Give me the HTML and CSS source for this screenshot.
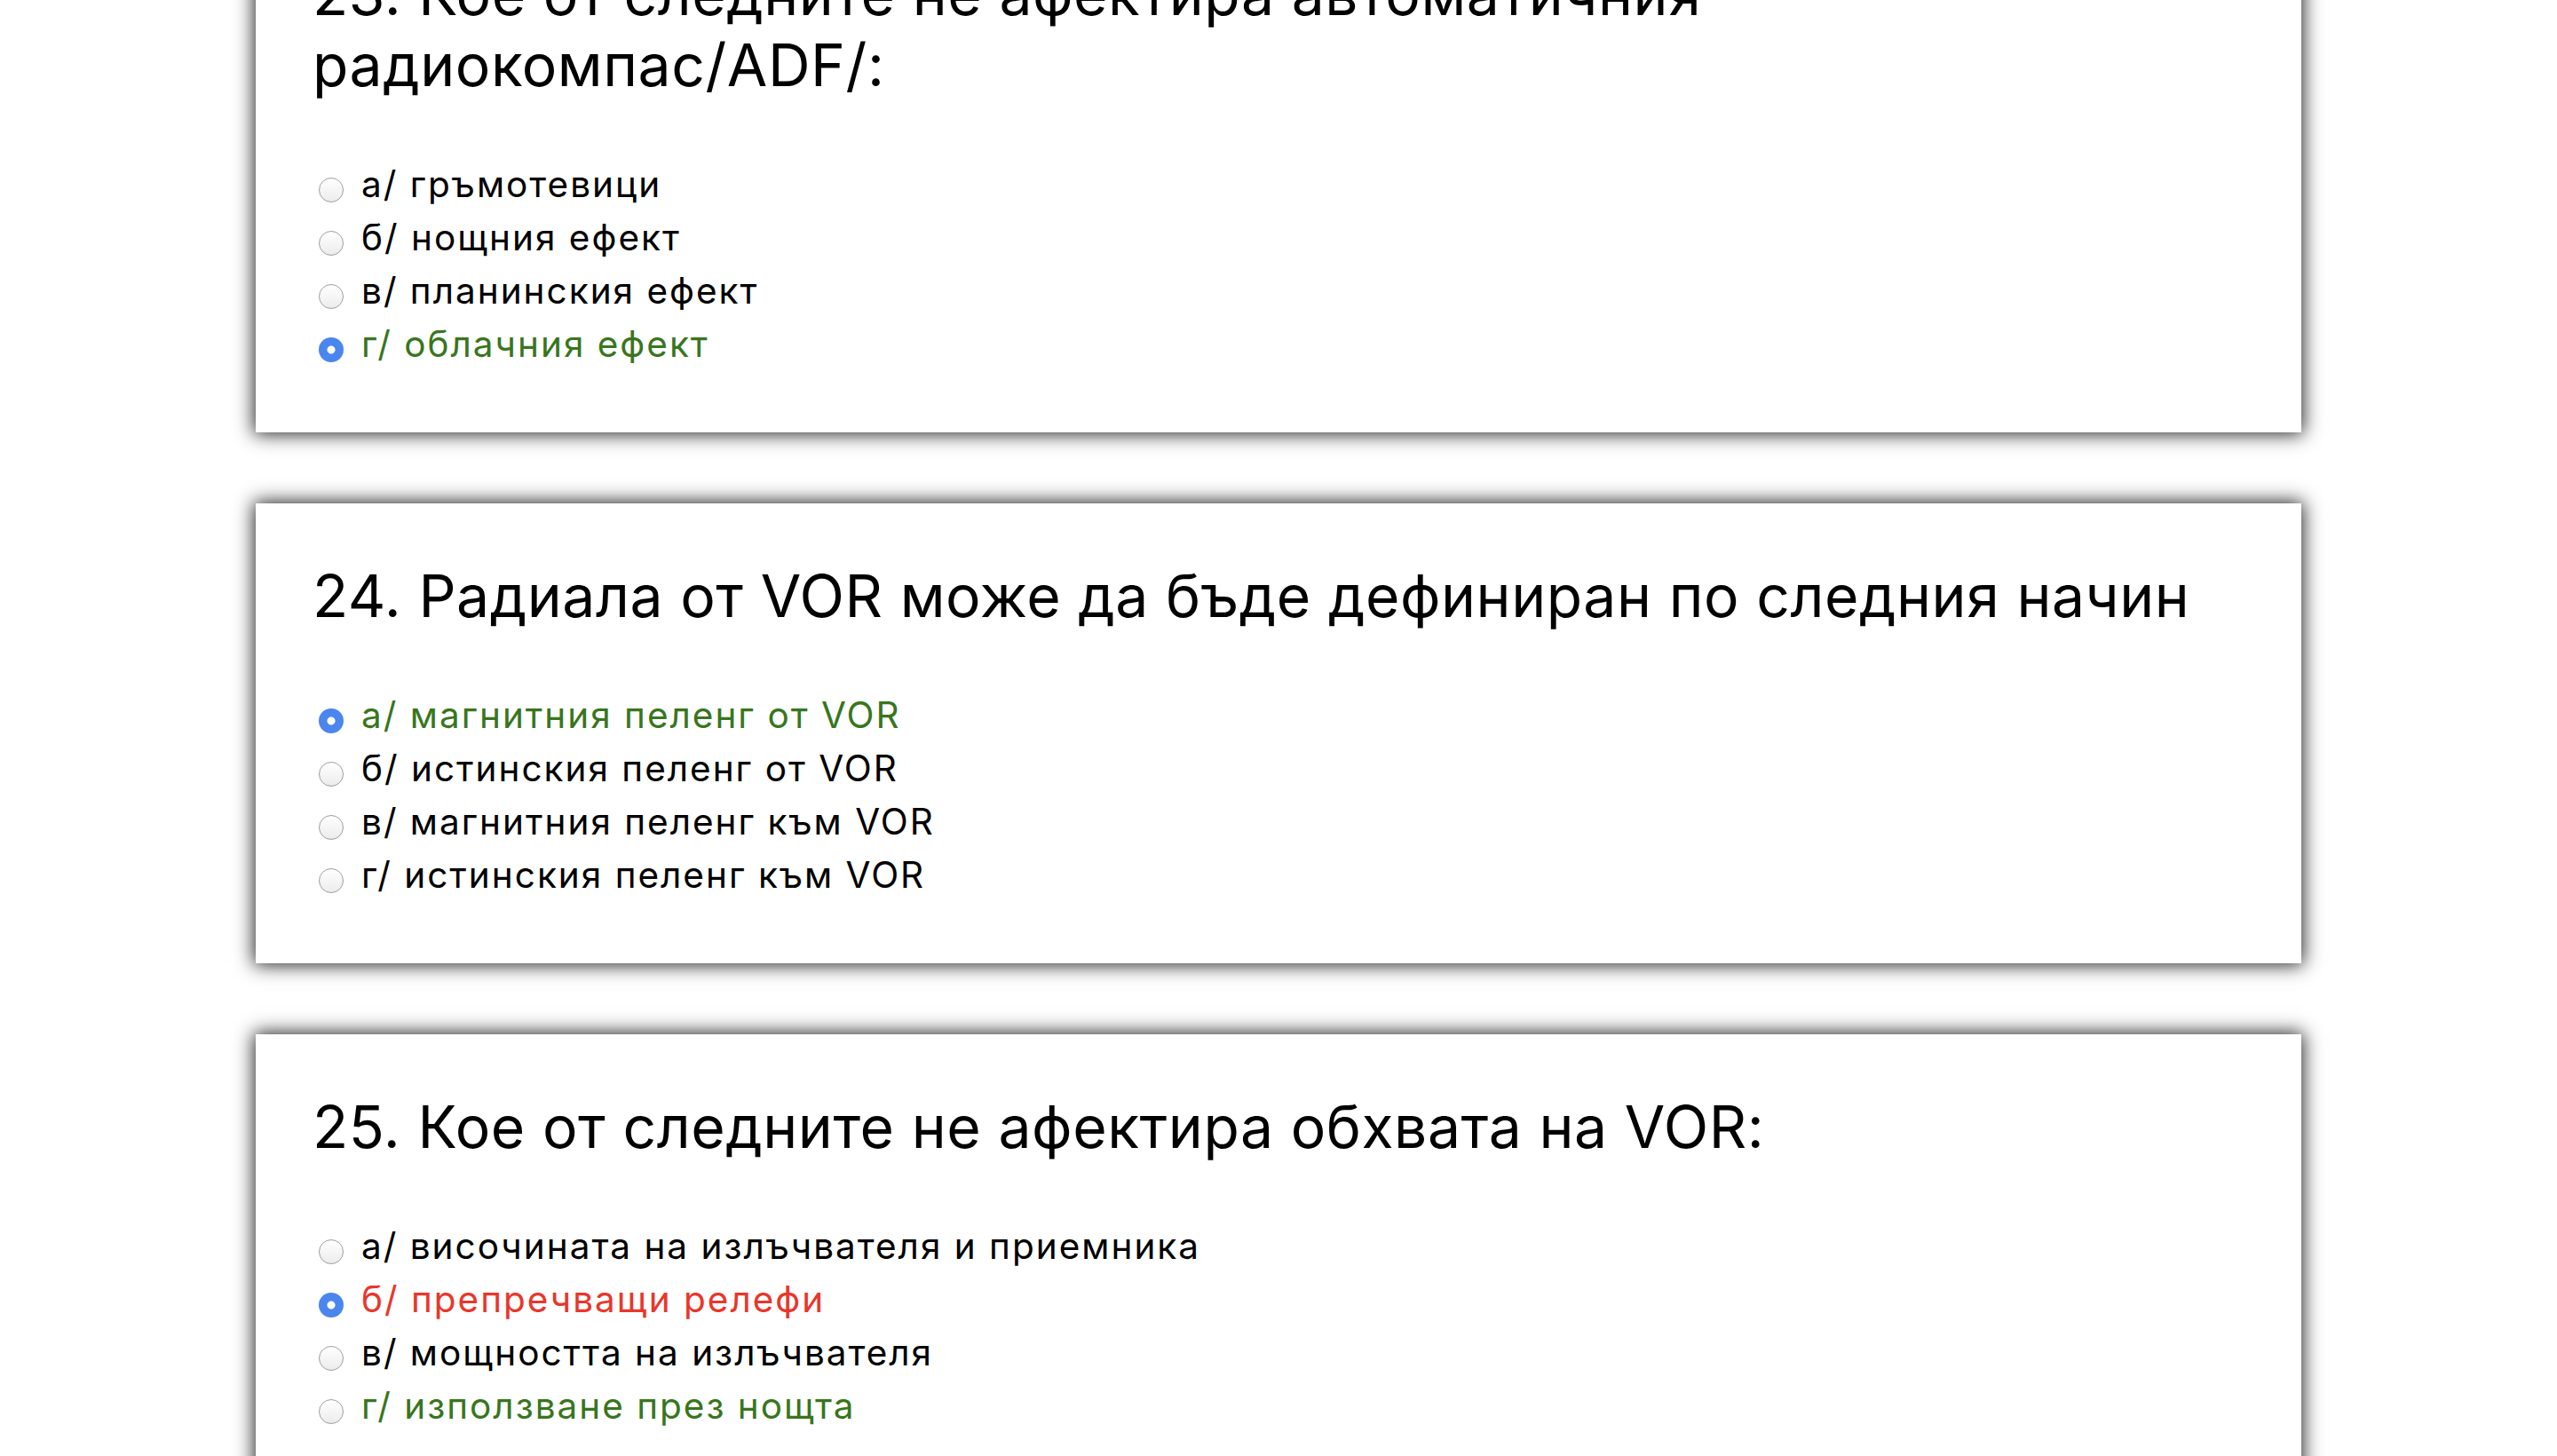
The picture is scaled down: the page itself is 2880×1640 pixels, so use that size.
FILE: index.html
```html
<!DOCTYPE html>
<html lang="bg">
<head>
<meta charset="utf-8">
<title>Тест</title>
<link rel="stylesheet" href="styles.css">
</head>
<body>
<main class="quiz">
  <section class="card card-first">
    <h2 class="question">23. Кое от следните не афектира автоматичния радиокомпас/ADF/:</h2>
    <ul class="options">
      <li class="option"><input type="radio" name="q23" class="radio" disabled><span>а/ гръмотевици</span></li>
      <li class="option"><input type="radio" name="q23" class="radio" disabled><span>б/ нощния ефект</span></li>
      <li class="option"><input type="radio" name="q23" class="radio" disabled><span>в/ планинския ефект</span></li>
      <li class="option correct"><input type="radio" name="q23" class="radio" checked disabled><span>г/ облачния ефект</span></li>
    </ul>
  </section>
  <section class="card">
    <h2 class="question">24. Радиала от VOR може да бъде дефиниран по следния начин</h2>
    <ul class="options">
      <li class="option correct"><input type="radio" name="q24" class="radio" checked disabled><span>а/ магнитния пеленг от VOR</span></li>
      <li class="option"><input type="radio" name="q24" class="radio" disabled><span>б/ истинския пеленг от VOR</span></li>
      <li class="option"><input type="radio" name="q24" class="radio" disabled><span>в/ магнитния пеленг към VOR</span></li>
      <li class="option"><input type="radio" name="q24" class="radio" disabled><span>г/ истинския пеленг към VOR</span></li>
    </ul>
  </section>
  <section class="card">
    <h2 class="question">25. Кое от следните не афектира обхвата на VOR:</h2>
    <ul class="options">
      <li class="option"><input type="radio" name="q25" class="radio" disabled><span>а/ височината на излъчвателя и приемника</span></li>
      <li class="option wrong"><input type="radio" name="q25" class="radio" checked disabled><span>б/ препречващи релефи</span></li>
      <li class="option"><input type="radio" name="q25" class="radio" disabled><span>в/ мощността на излъчвателя</span></li>
      <li class="option correct"><input type="radio" name="q25" class="radio" disabled><span>г/ използване през нощта</span></li>
    </ul>
  </section>
</main>
</body>
</html>
```
FILE: styles.css
```css
html, body {
  margin: 0;
  padding: 0;
  background: #ffffff;
}

body {
  font-family: Inter, "Noto Sans", "DejaVu Sans", sans-serif;
  color: #000000;
  overflow: hidden;
}

.quiz {
  width: 80%;
  margin: 0 auto;
  display: flex;
  flex-direction: column;
  gap: 80px;
  padding-bottom: 200px;
}

.card {
  background: #ffffff;
  box-shadow: 0 0 20px 2px rgba(0, 0, 0, 0.85);
  padding: 64px 64px 69px 64px;
}

.card-first {
  margin-top: -111px;
}

.question {
  margin: 0;
  font-size: 66px;
  font-weight: 400;
  line-height: 80px;
  letter-spacing: 0.55px;
}

.options {
  list-style: none;
  margin: 65px 0 0 0;
  padding: 0;
}

.option {
  font-size: 40.5px;
  line-height: 60px;
  letter-spacing: 2px;
  white-space: nowrap;
}

.option.correct {
  color: #38761d;
}

.option.wrong {
  color: #e8372b;
}

.radio {
  -webkit-appearance: none;
  appearance: none;
  box-sizing: border-box;
  width: 28px;
  height: 28px;
  margin: 0 20px 0 7px;
  border-radius: 50%;
  border: 1.5px solid #9e9e9e;
  background: linear-gradient(#ffffff, #ececec);
  box-shadow: inset 0 1px 1px rgba(255, 255, 255, 0.9);
  vertical-align: -6px;
  opacity: 1;
}

.radio:checked {
  border: none;
  background: radial-gradient(circle, #ffffff 0, #ffffff 4px, #4a86ee 5px, #4a86ee 100%);
  box-shadow: none;
}
```
